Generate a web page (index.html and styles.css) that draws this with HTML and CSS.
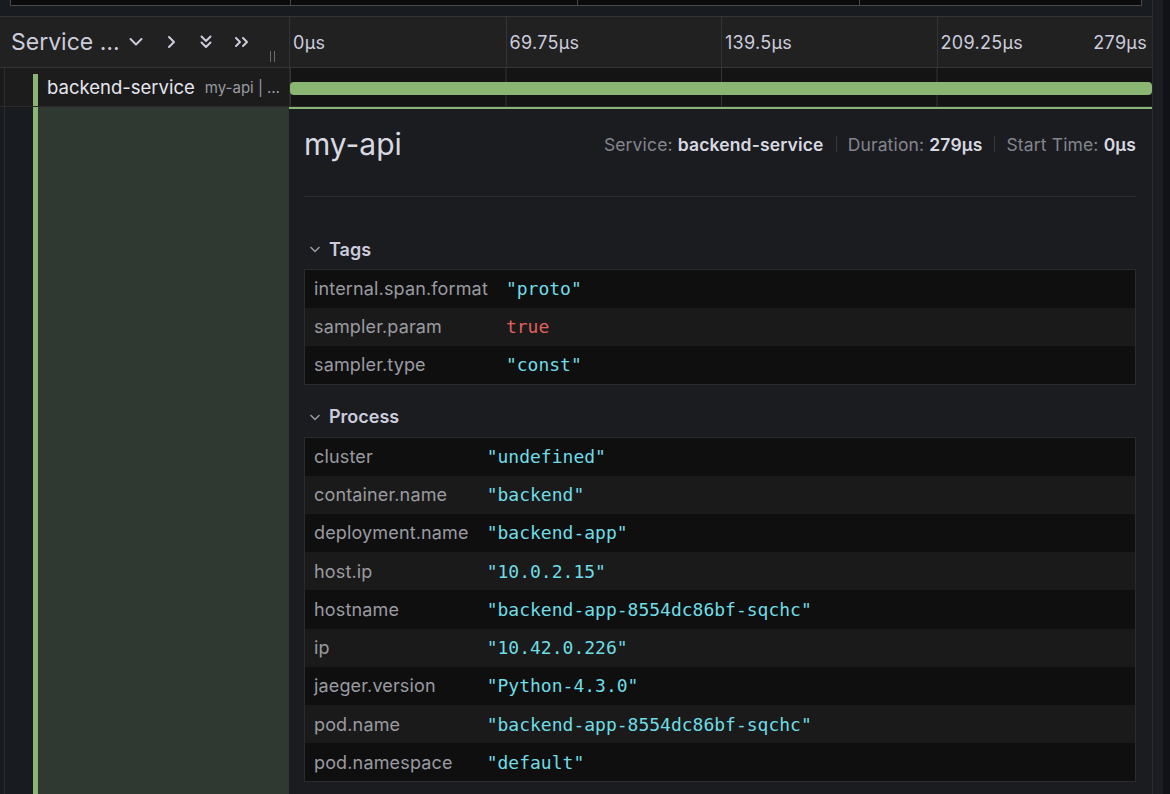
FILE: index.html
```html
<!DOCTYPE html>
<html>
<head>
<meta charset="utf-8">
<link rel="stylesheet" href="styles.css">
</head>
<body>
<div class="app">
  <div class="main">
    <div class="minimap">
      <div class="mm-box"></div>
      <div class="mm-box"></div>
      <div class="mm-box"></div>
      <div class="mm-box"></div>
    </div>
    <div class="spacer"></div>

    <div class="row header-row">
      <div class="left-col header-left">
        <span class="svc-title">Service …</span>
        <span class="hdr-icons">
          <svg class="ic" width="16" height="16" viewBox="0 0 16 16"><path d="M2.5 5 L8 10.5 L13.5 5" /></svg>
          <svg class="ic" width="16" height="16" viewBox="0 0 16 16"><path d="M6 3 L11 8 L6 13" /></svg>
          <svg class="ic" width="16" height="18" viewBox="0 0 16 18"><path d="M3.5 3.5 L8 8 L12.5 3.5 M3.5 9.5 L8 14 L12.5 9.5" /></svg>
          <svg class="ic" width="18" height="16" viewBox="0 0 18 16"><path d="M3 4 L7 8 L3 12 M10 4 L14 8 L10 12" /></svg>
        </span>
        <span class="resizer"><i></i><i></i></span>
      </div>
      <div class="timeline ticks-head">
        <div class="tick"><span>0µs</span></div>
        <div class="tick"><span>69.75µs</span></div>
        <div class="tick"><span>139.5µs</span></div>
        <div class="tick last"><span>209.25µs</span><span>279µs</span></div>
      </div>
    </div>

    <div class="row span-row">
      <div class="left-col span-left">
        <div class="guide"></div>
        <div class="indent"></div>
        <div class="color-bar top"></div>
        <span class="span-name">backend-service</span>
        <span class="span-op">my-api | …</span>
      </div>
      <div class="timeline span-track">
        <div class="span-bar"></div>
      </div>
    </div>

    <div class="row detail-row">
      <div class="left-col detail-left">
        <div class="guide"></div>
        <div class="indent"></div>
        <div class="color-bar"></div>
        <div class="detail-fill"></div>
      </div>
      <div class="detail">
        <div class="detail-head">
          <h1 class="op-name">my-api</h1>
          <div class="meta">
            <span class="lbl">Service:</span>&nbsp;<span class="val">backend-service</span>
            <span class="sep"></span>
            <span class="lbl">Duration:</span>&nbsp;<span class="val">279µs</span>
            <span class="sep"></span>
            <span class="lbl">Start Time:</span>&nbsp;<span class="val">0µs</span>
          </div>
        </div>

        <div class="section-head first">
          <svg class="chev" width="12" height="12" viewBox="0 0 12 12"><path d="M1.5 4 L6 8.5 L10.5 4" /></svg>
          <span>Tags</span>
        </div>
        <table class="kv">
          <tr><td class="k">internal.span.format</td><td class="v">"proto"</td></tr>
          <tr><td class="k">sampler.param</td><td class="v bool">true</td></tr>
          <tr><td class="k">sampler.type</td><td class="v">"const"</td></tr>
        </table>

        <div class="section-head">
          <svg class="chev" width="12" height="12" viewBox="0 0 12 12"><path d="M1.5 4 L6 8.5 L10.5 4" /></svg>
          <span>Process</span>
        </div>
        <table class="kv">
          <tr><td class="k">cluster</td><td class="v">"undefined"</td></tr>
          <tr><td class="k">container.name</td><td class="v">"backend"</td></tr>
          <tr><td class="k">deployment.name</td><td class="v">"backend-app"</td></tr>
          <tr><td class="k">host.ip</td><td class="v">"10.0.2.15"</td></tr>
          <tr><td class="k">hostname</td><td class="v">"backend-app-8554dc86bf-sqchc"</td></tr>
          <tr><td class="k">ip</td><td class="v">"10.42.0.226"</td></tr>
          <tr><td class="k">jaeger.version</td><td class="v">"Python-4.3.0"</td></tr>
          <tr><td class="k">pod.name</td><td class="v">"backend-app-8554dc86bf-sqchc"</td></tr>
          <tr><td class="k">pod.namespace</td><td class="v">"default"</td></tr>
        </table>
      </div>
    </div>
  </div>
  <div class="scrollbar"><div class="sb-track"></div><div class="sb-edge"></div></div>
</div>
</body>
</html>
```

FILE: styles.css
```css
* { box-sizing: border-box; }
html, body {
  margin: 0;
  padding: 0;
  background: #181b1f;
  height: 794px;
  overflow: hidden;
  font-family: Inter, Roboto, "Liberation Sans", sans-serif;
  color: #ccccdc;
}
.app {
  display: flex;
  width: 1170px;
  height: 794px;
}
.main {
  width: 1152px;
  display: flex;
  flex-direction: column;
  flex: none;
}
.scrollbar {
  flex: 1;
  display: flex;
  border-left: 1px solid #2a2c31;
}
.sb-track { width: 10px; background: #1b1d21; }
.sb-edge { flex: 1; background: #111217; }

/* minimap strip */
.minimap {
  display: flex;
  height: 6px;
  margin-left: 10px;
  width: 1132px;
  background: #0b0b0c;
  border-bottom: 1px solid #4a4a4e;
  border-right: 1px solid #4a4a4e;
}
.mm-box {
  border-left: 1px solid #4a4a4e;
}
.mm-box:nth-child(1) { width: 280px; }
.mm-box:nth-child(2) { width: 287px; }
.mm-box:nth-child(3) { width: 282px; }
.mm-box:nth-child(4) { flex: 1; }
.spacer { height: 10px; }

.row { display: flex; }
.left-col { width: 290px; flex: none; }
.timeline { flex: 1; }

/* header */
.header-row {
  height: 52px;
  background: #212121;
  border-top: 1px solid #333437;
  border-bottom: 1px solid #333437;
}
.header-left {
  display: flex;
  align-items: center;
  padding-left: 11px;
  border-right: 1px solid #333437;
  white-space: nowrap;
}
.svc-title {
  font-size: 23px;
  color: #ccccdc;
  white-space: nowrap;
}
.hdr-icons {
  display: flex;
  align-items: center;
  margin-left: 8px;
  gap: 19px;
}
.ic { fill: none; stroke: #ccccdc; stroke-width: 2; stroke-linecap: round; stroke-linejoin: round; flex: none; }
.resizer {
  display: flex;
  gap: 3px;
  align-self: flex-end;
  margin: 0 0 5px 19px;
}
.resizer i {
  display: block;
  width: 1px;
  height: 11px;
  background: #6b6b70;
}
.ticks-head {
  display: grid;
  grid-template-columns: repeat(4, 1fr);
}
.tick {
  display: flex;
  align-items: center;
  padding-left: 3px;
  font-size: 18px;
  letter-spacing: 0.3px;
  color: #ccccdc;
  border-left: 1px solid #333437;
}
.tick:first-child { border-left: none; }
.tick.last { justify-content: space-between; padding-right: 5px; }

/* span row */
.span-row {
  height: 39px;
  border-bottom: 1px solid #2a2a2c;
}
.span-left {
  display: flex;
  align-items: center;
  background: #1c1c1d;
  overflow: hidden;
}
.guide {
  width: 5px;
  flex: none;
  align-self: stretch;
  border-right: 1px solid #2b2d31;
  background: #181b1f;
}
.span-left .guide { background: #1a1a1b; }
.indent { width: 28px; flex: none; align-self: stretch; }
.color-bar {
  width: 5px;
  flex: none;
  align-self: stretch;
  background: #8ab573;
}
.color-bar.top { margin-top: 6px; }
.span-name {
  font-size: 18.5px;
  color: #e6e6ee;
  margin-left: 9px;
  white-space: nowrap;
}
.span-op {
  font-size: 15px;
  color: #9a9aa2;
  margin-left: 10px;
  white-space: nowrap;
}
.span-track {
  background-color: #141414;
  background-image: linear-gradient(to right, #333437 1px, transparent 1px);
  background-size: 25% 100%;
  background-position: 0 0;
  display: flex;
  align-items: center;
  border-left: 1px solid #2a2a2c;
  margin-left: -1px;
}
.span-bar {
  height: 13px;
  width: 100%;
  background: #8ab573;
  border-radius: 4px;
  margin-top: 2px;
}

/* detail row */
.detail-row { flex: 1; min-height: 0; }
.detail-left {
  display: flex;
  background: #181b1f;
}
.detail-left .guide { background: #181b1f; }
.detail-fill { flex: 1; background: #2f3831; }
.detail {
  flex: 1;
  background: #1a1c20;
  border-top: 2px solid #8ab573;
  margin-left: -1px;
  padding: 0 16px 0 15px;
  overflow: hidden;
}
.detail-head {
  display: flex;
  align-items: center;
  justify-content: space-between;
  height: 42px;
  margin-top: 14px;
  padding-bottom: 31px;
  box-sizing: content-box;
  border-bottom: 1px solid #2c2e33;
}
.op-name {
  margin: 0;
  font-size: 30px;
  font-weight: 400;
  color: #d8d9e0;
}
.meta {
  display: flex;
  align-items: center;
  font-size: 17.5px;
  letter-spacing: 0.15px;
  white-space: nowrap;
}
.lbl { color: #85858d; }
.val { color: #d8d9e0; font-weight: 600; }
.sep {
  display: inline-block;
  width: 1px;
  height: 16px;
  background: #35373c;
  margin: 0 11px 0 12px;
}
.section-head {
  display: flex;
  align-items: center;
  height: 24px;
  margin: 20px 0 8px;
  font-size: 18px;
  font-weight: 600;
  color: #ccccdc;
}
.section-head.first { margin-top: 40px; }
.chev {
  fill: none;
  stroke: #a0a0a8;
  stroke-width: 1.3;
  margin: 0 8px 0 5px;
}
.kv {
  width: 100%;
  border-collapse: collapse;
  border: 1px solid #2a2b2f;
}
.kv tr { height: 38.25px; background: #0f0f10; }
.kv tr:nth-child(even) { background: #1a1a1b; }
.kv td { padding: 0; vertical-align: middle; }
.kv .k {
  width: 1px;
  white-space: nowrap;
  padding: 0 18px 0 9px;
  font-size: 18px;
  letter-spacing: 0.15px;
  color: #9a9aa0;
}
.kv .v {
  font-family: "DejaVu Sans Mono", "Liberation Mono", monospace;
  font-size: 18px;
  color: #6fdde6;
  white-space: nowrap;
}
.kv .v.bool { color: #e0605e; }
```
